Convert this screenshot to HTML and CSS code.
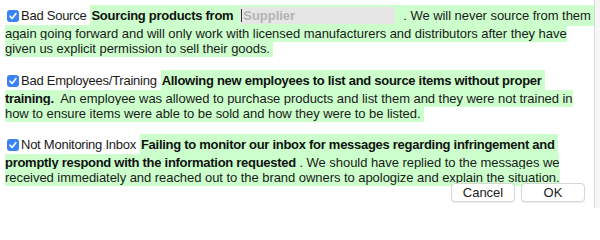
FILE: index.html
```html
<!DOCTYPE html>
<html>
<head>
<meta charset="utf-8">
<link rel="stylesheet" href="styles.css">
</head>
<body>
<div class="window">
  <div class="content">
    <div class="item">
      <div class="row">
        <span class="label"><span class="check"><svg width="12" height="12" viewBox="0 0 12 12"><rect x="0" y="0" width="12" height="12" rx="3" fill="#3b82f6"/><path d="M3 6.2 L5.1 8.4 L9 3.6" fill="none" stroke="#fff" stroke-width="1.6" stroke-linecap="round" stroke-linejoin="round"/></svg></span>Bad Source</span>
        <span class="hl first"><b>Sourcing products from</b><span class="field"><span class="caret"></span><span class="ph">Supplier</span></span>. We will never source from them&nbsp;</span>
      </div>
      <div class="rest"><span class="hl">again going forward and will only work with licensed manufacturers and distributors after they have<br>given us explicit permission to sell their goods.&nbsp;</span></div>
    </div>
    <div class="item">
      <div class="row">
        <span class="label"><span class="check"><svg width="12" height="12" viewBox="0 0 12 12"><rect x="0" y="0" width="12" height="12" rx="3" fill="#3b82f6"/><path d="M3 6.2 L5.1 8.4 L9 3.6" fill="none" stroke="#fff" stroke-width="1.6" stroke-linecap="round" stroke-linejoin="round"/></svg></span>Bad Employees/Training</span>
        <span class="hl first"><b>Allowing new employees to list and source items without proper</b>&nbsp;</span>
      </div>
      <div class="rest"><span class="hl"><b>training.</b>&nbsp; An employee was allowed to purchase products and list them and they were not trained in<br>how to ensure items were able to be sold and how they were to be listed.&nbsp;</span></div>
    </div>
    <div class="item">
      <div class="row">
        <span class="label"><span class="check"><svg width="12" height="12" viewBox="0 0 12 12"><rect x="0" y="0" width="12" height="12" rx="3" fill="#3b82f6"/><path d="M3 6.2 L5.1 8.4 L9 3.6" fill="none" stroke="#fff" stroke-width="1.6" stroke-linecap="round" stroke-linejoin="round"/></svg></span>Not Monitoring Inbox</span>
        <span class="hl first"><b>Failing to monitor our inbox for messages regarding infringement and</b>&nbsp;</span>
      </div>
      <div class="rest"><span class="hl"><b>promptly respond with the information requested</b> . We should have replied to the messages we<br>received immediately and reached out to the brand owners to apologize and explain the situation.</span></div>
    </div>
  </div>
  <div class="buttons">
    <button class="btn">Cancel</button>
    <button class="btn">OK</button>
  </div>
  <div class="scroll"></div>
</div>
</body>
</html>
```
FILE: styles.css
```css
html, body {
  margin: 0;
  padding: 0;
  background: #fff;
}
.window {
  position: relative;
  width: 600px;
  height: 208px;
  overflow: hidden;
  font-family: "Liberation Sans", Arial, sans-serif;
  font-size: 13px;
  color: #1a1a1a;
  letter-spacing: -0.05px;
}
.content {
  padding: 5px 0 0 5px;
  width: 590px;
}
.item {
  white-space: nowrap;
  margin-bottom: 13.5px;
}
.item:last-child {
  margin-bottom: 0;
}
.row {
  display: flex;
  align-items: stretch;
  height: 21px;
}
.label {
  display: flex;
  align-items: center;
  background: #fff;
  padding: 0 4px 0 2px;
  letter-spacing: -0.25px;
}
.check {
  display: block;
  width: 12px;
  height: 12px;
  margin-right: 2px;
  margin-top: 1px;
}
.check svg {
  display: block;
}
.hl {
  background: #ccffcc;
}
.hl.first {
  display: flex;
  align-items: center;
  padding-left: 1px;
}
.rest {
  line-height: 15px;
}
.rest .hl {
  padding: 1px 0 1px;
}
.hl b {
  font-weight: bold;
  color: #111;
  letter-spacing: -0.28px;
}
.field {
  display: inline-block;
  width: 155px;
  height: 17px;
  background: #e6e6e6;
  position: relative;
  line-height: 17px;
  margin: 0 8px 0 7px;
}
.caret {
  position: absolute;
  left: 1px;
  top: 2px;
  width: 1px;
  height: 13px;
  background: #333;
}
.ph {
  padding-left: 3px;
  color: #b3b3b3;
  font-weight: bold;
}
.buttons {
  display: flex;
  justify-content: flex-end;
  gap: 6px;
  padding-right: 15px;
  margin-top: -2px;
}
.btn {
  width: 64px;
  height: 19px;
  background: #fff;
  border: 1px solid #d6d6d6;
  border-radius: 4px;
  box-shadow: 0 1px 1px rgba(0,0,0,0.08);
  font-family: "Liberation Sans", Arial, sans-serif;
  font-size: 13px;
  color: #222;
  padding: 0;
  line-height: 17px;
}
.scroll {
  position: absolute;
  right: 0;
  top: 0;
  width: 5px;
  height: 208px;
  background: #f6f6f6;
  border-left: 1px solid #d9d9d9;
}
```
